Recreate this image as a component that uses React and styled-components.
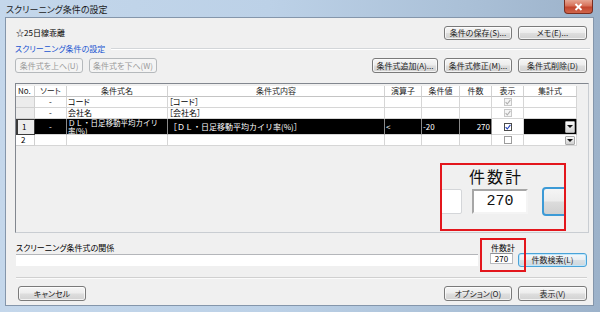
import React from 'react';
import styled, { createGlobalStyle, css } from 'styled-components';

const GlobalStyle = createGlobalStyle`
  html, body { margin: 0; padding: 0; background: #fff; }
  body {
    width: 600px; height: 312px; overflow: hidden;
    font-family: "Noto Sans CJK JP", "Noto Sans", sans-serif;
    font-feature-settings: "palt";
  }
  * { box-sizing: border-box; }
`;

const Window = styled.div`
  width: 600px;
  height: 312px;
  display: flex;
  flex-direction: column;
  background: linear-gradient(to right, #c4d7eb 0%, #bcd1e7 45%, #aac0d7 78%, #9cb2ca 100%);
`;

const TitleBar = styled.div`
  height: 17px;
  display: flex;
  align-items: flex-start;
  padding-left: 6px;
`;

const TitleText = styled.div`
  font-size: 9px;
  line-height: 16px;
  padding-top: 2px;
  color: #1b1b1b;
`;

const CloseButton = styled.div`
  margin-left: auto;
  margin-right: 7px;
  width: 29px;
  height: 14px;
  border: 1px solid #7a2d1f;
  border-top: none;
  border-radius: 0 0 4px 4px;
  background: linear-gradient(#e6a592 0%, #d77159 45%, #c2452d 55%, #d0654b 100%);
  display: flex;
  align-items: center;
  justify-content: center;
`;

const FrameBody = styled.div`
  flex: 1;
  display: flex;
  padding: 0 6px 6px 5px;
`;

const Client = styled.div`
  flex: 1;
  position: relative;
  background: #f0f0f0;
  border: 1px solid #8496ab;
  display: flex;
  flex-direction: column;
  padding: 8px 6px 4px 9px;
  font-size: 8px;
  color: #000;
`;

const TopRow = styled.div`
  height: 14px;
  display: flex;
  align-items: center;
  gap: 6px;
`;

const ListName = styled.div`
  font-size: 8px;
  line-height: 10px;
  padding-left: 1px;
  margin-right: auto;
`;

const Button = styled.button`
  flex: none;
  width: ${p => p.$w || 68}px;
  height: ${p => p.$h || 14}px;
  padding: 0;
  font-family: "Noto Sans CJK JP", sans-serif;
  font-feature-settings: "palt";
  font-size: 8px;
  line-height: 10px;
  color: #222;
  border: 1px solid #7a7a7a;
  border-radius: 3px;
  background: linear-gradient(#f6f6f6 0%, #ececec 48%, #dedede 52%, #d2d2d2 100%);
  box-shadow: inset 0 0 0 1px rgba(255,255,255,0.7);
  display: flex;
  align-items: center;
  justify-content: center;
  ${p => p.$ml && css`margin-left: ${p.$ml}px;`}
  ${p => p.disabled && css`
    border-color: #b5b9bc;
    background: #f4f4f4;
    color: #9a9a9a;
    box-shadow: none;
  `}
  ${p => p.$default && css`
    border-color: #4aa3d8;
    box-shadow: inset 0 0 0 1px #bfe6fb;
    background: linear-gradient(#f4f8fb 0%, #e9eef2 48%, #d9e0e5 52%, #cfd7dd 100%);
  `}
`;

const SectionRow = styled.div`
  margin-top: 4px;
  height: 10px;
  display: flex;
  align-items: center;
  margin-right: -3px;
`;

const SectionLabel = styled.div`
  color: #1a55d0;
  font-size: 8px;
  line-height: 10px;
`;

const SectionLine = styled.div`
  flex: 1;
  height: 2px;
  margin-left: 6px;
  border-top: 1px solid #d3d6d9;
  border-bottom: 1px solid #ffffff;
`;

const ButtonRow = styled.div`
  margin-top: 4px;
  height: 15px;
  display: flex;
  gap: 6px;
`;

const Spacer = styled.div`
  flex: 1;
`;

const GridBox = styled.div`
  margin-top: 10px;
  height: 150px;
  margin-right: -2px;
  border: 1px solid #82878f;
  border-right-color: #c9cdd2;
  border-bottom-color: #c9cdd2;
  background: #f0f0f0;
  padding-top: 2px;
  overflow: hidden;
`;

const COLS = '19px 32px 101px 217px 37px 38px 32px 32px 53px';

const HeaderRow = styled.div`
  display: grid;
  grid-template-columns: ${COLS};
  height: 11px;
`;

const HeadCell = styled.div`
  background: #fff;
  border-right: 1px solid #d2d2d2;
  border-bottom: 1px solid #c4c4c4;
  font-size: 8px;
  line-height: 10px;
  color: #222;
  text-align: ${p => p.$align || 'center'};
  padding: 0 2px;
  white-space: nowrap;
`;

const Row = styled.div`
  display: grid;
  grid-template-columns: ${COLS};
  height: ${p => (p.$tall ? 16 : 11)}px;
`;

const Cell = styled.div`
  background: ${p => (p.$selected ? '#000' : '#fff')};
  color: ${p => (p.$selected ? '#fff' : '#000')};
  border-right: 1px solid ${p => (p.$selected ? '#8a8a8a' : '#d6d6d6')};
  border-bottom: 1px solid #d6d6d6;
  font-size: 8px;
  line-height: 10px;
  padding: 0 1px;
  white-space: nowrap;
  overflow: hidden;
  display: flex;
  align-items: center;
  justify-content: ${p => p.$justify || 'flex-start'};
  ${p => p.$selected && css`font-feature-settings: normal;`}
`;

const NameLines = styled.div`
  font-size: 7.5px;
  line-height: 7.5px;
  white-space: normal;
`;

const NoCell = styled.div`
  font-size: 8px;
  line-height: 10px;
  padding-left: 5px;
  display: flex;
  align-items: center;
  border-right: 1px solid #d0d0d0;
  border-bottom: 1px solid #d0d0d0;
  background: ${p => (p.$kind === 'normal' ? '#fff' : '#ececec')};
  ${p => p.$kind === 'current' && css`
    border: 1px solid #3a3a3a;
    border-left-width: 2px;
    background: #ececec;
    padding-left: 4px;
  `}
`;

const CheckBox = styled.span`
  width: 8px;
  height: 8px;
  display: inline-flex;
  align-items: center;
  justify-content: center;
  border: 1px solid ${p => (p.$state === 'disabled' ? '#c8c8c8' : p.$state === 'checked' ? '#4a4a4a' : '#9c9c9c')};
  background: ${p => (p.$state === 'disabled' ? '#f5f5f5' : '#fff')};
`;

const DropArrow = styled.span`
  margin-left: auto;
  width: 10px;
  height: ${p => (p.$tall ? 12 : 9)}px;
  display: inline-flex;
  align-items: center;
  justify-content: center;
  border: 1px solid #a8a8a8;
  border-radius: 1px;
  background: linear-gradient(#fbfbfb, #e2e2e2 55%, #d2d2d2);
  &::after {
    content: "";
    border-left: 3px solid transparent;
    border-right: 3px solid transparent;
    border-top: 3px solid #111;
  }
`;

const LowerRow = styled.div`
  margin-top: 10px;
  height: 24px;
  display: flex;
  align-items: flex-end;
`;

const RelationField = styled.div`
  flex: 1;
  display: flex;
  flex-direction: column;
  margin-right: 12px;
  margin-bottom: 1px;
`;

const FieldLabel = styled.div`
  font-size: 8px;
  line-height: 10px;
  padding-left: 1px;
  white-space: nowrap;
`;

const RelationInput = styled.div`
  margin-top: 1px;
  margin-left: 1px;
  height: 12px;
  background: #fff;
  border-top: 1px solid #b4b6ba;
`;

const CountField = styled.div`
  width: 23px;
  margin-right: 5px;
  margin-bottom: 3px;
  display: flex;
  flex-direction: column;
`;

const CountBox = styled.div`
  height: 11px;
  background: #fff;
  border: 1px solid #b8bbbf;
  border-top-color: #8e9196;
  font-size: 8px;
  line-height: 9px;
  text-align: center;
`;

const BottomLine = styled.div`
  margin-top: 10px;
  margin-left: 1px;
  height: 2px;
  border-top: 1px solid #d0d0d0;
  border-bottom: 1px solid #fbfbfb;
`;

const BottomRow = styled.div`
  margin-top: 7px;
  height: 15px;
  display: flex;
  gap: 6px;
`;

const ZoomCallout = styled.div`
  position: absolute;
  left: 434px;
  top: 145px;
  width: 126px;
  height: 68px;
  border: 2px solid #e3161c;
  background: #f0f0f0;
  overflow: hidden;
  display: flex;
  flex-direction: column;
`;

const CalloutTitle = styled.div`
  margin-top: 3px;
  margin-left: 27px;
  font-size: 16px;
  line-height: 17px;
  letter-spacing: 2px;
  color: #111;
`;

const CalloutRow = styled.div`
  margin-top: 2px;
  display: flex;
  align-items: center;
  height: 29px;
`;

const StubBox = styled.div`
  flex: none;
  width: 40px;
  height: 25px;
  margin-left: -20px;
  background: #fff;
  border: 1px solid #d4d6d9;
  border-radius: 2px;
`;

const BigCount = styled.div`
  flex: none;
  width: 56px;
  height: 25px;
  margin-left: 10px;
  background: #fff;
  border: 2px solid #a6a6a6;
  border-right-color: #f4f4f4;
  border-bottom-color: #f4f4f4;
  font-family: "Liberation Mono", monospace;
  font-size: 15px;
  line-height: 21px;
  text-align: center;
  color: #111;
`;

const StubButton = styled.div`
  flex: none;
  width: 40px;
  height: 29px;
  margin-left: 14px;
  border: 2px solid #3c9ad6;
  border-radius: 4px;
  background: linear-gradient(#f5f5f5 0%, #ececec 48%, #dcdcdc 52%, #d0d0d0 100%);
`;

const CountHighlight = styled.div`
  position: absolute;
  left: 474px;
  top: 220px;
  width: 46px;
  height: 34px;
  border: 2px solid #e3161c;
  pointer-events: none;
`;

const rows = [
  { no: '', kind: 'fixed', sort: '-', name: 'コード', content: '［コード］', check: 'disabled' },
  { no: '', kind: 'fixed', sort: '-', name: '会社名', content: '［会社名］', check: 'disabled' },
  {
    no: '1', kind: 'current', sort: '-', name: ['ＤＬ・日足移動平均カイリ', '率(%)'],
    content: '［ＤＬ・日足移動平均カイリ率(%)］', op: '<', val: '-20', count: '270',
    check: 'checked', agg: true, selected: true, tall: true,
  },
  { no: '2', kind: 'normal', sort: '', name: '', content: '', check: 'empty', agg: true },
];

function Check({ state }) {
  return (
    <CheckBox $state={state}>
      {state !== 'empty' && (
        <svg width="6" height="6" viewBox="0 0 6 6">
          <path d="M0.6 3.2 L2.3 5 L5.4 0.8" fill="none"
            stroke={state === 'checked' ? '#1f3fb8' : '#b0b0b0'} strokeWidth="1.1" />
        </svg>
      )}
    </CheckBox>
  );
}

export default function App() {
  return (
    <>
      <GlobalStyle />
      <Window>
        <TitleBar>
          <TitleText>スクリーニング条件の設定</TitleText>
          <CloseButton>
            <svg width="9" height="8" viewBox="0 0 9 8">
              <path d="M1.5 1 L7.5 7 M7.5 1 L1.5 7" stroke="#fff" strokeWidth="1.8" />
            </svg>
          </CloseButton>
        </TitleBar>
        <FrameBody>
          <Client>
            <TopRow>
              <ListName>☆25日線乖離</ListName>
              <Button>条件の保存(S)...</Button>
              <Button $w={69}>メモ(E)...</Button>
            </TopRow>
            <SectionRow>
              <SectionLabel>スクリーニング条件の設定</SectionLabel>
              <SectionLine />
            </SectionRow>
            <ButtonRow>
              <Button disabled $h={15}>条件式を上へ(U)</Button>
              <Button disabled $h={15}>条件式を下へ(W)</Button>
              <Spacer />
              <Button $w={66} $h={15}>条件式追加(A)...</Button>
              <Button $h={15}>条件式修正(M)...</Button>
              <Button $w={69} $h={15}>条件式削除(D)</Button>
            </ButtonRow>
            <GridBox>
              <HeaderRow>
                <HeadCell $align="left">No.</HeadCell>
                <HeadCell>ソート</HeadCell>
                <HeadCell>条件式名</HeadCell>
                <HeadCell>条件式内容</HeadCell>
                <HeadCell>演算子</HeadCell>
                <HeadCell>条件値</HeadCell>
                <HeadCell>件数</HeadCell>
                <HeadCell>表示</HeadCell>
                <HeadCell>集計式</HeadCell>
              </HeaderRow>
              {rows.map((r, i) => (
                <Row key={i} $tall={r.tall}>
                  <NoCell $kind={r.kind}>{r.no}</NoCell>
                  <Cell $selected={r.selected} $justify="center">{r.sort}</Cell>
                  <Cell $selected={r.selected}>
                    {Array.isArray(r.name) ? (
                      <NameLines>{r.name[0]}<br />{r.name[1]}</NameLines>
                    ) : r.name}
                  </Cell>
                  <Cell $selected={r.selected}>{r.content}</Cell>
                  <Cell $selected={r.selected}>{r.op}</Cell>
                  <Cell $selected={r.selected}>{r.val}</Cell>
                  <Cell $selected={r.selected} $justify="flex-end">{r.count}</Cell>
                  <Cell $justify="center"><Check state={r.check} /></Cell>
                  <Cell $selected={r.selected}>{r.agg && <DropArrow $tall={r.tall} />}</Cell>
                </Row>
              ))}
            </GridBox>
            <LowerRow>
              <RelationField>
                <FieldLabel>スクリーニング条件式の関係</FieldLabel>
                <RelationInput />
              </RelationField>
              <CountField>
                <FieldLabel>件数計</FieldLabel>
                <CountBox>270</CountBox>
              </CountField>
              <Button $default $w={69}>件数検索(L)</Button>
            </LowerRow>
            <BottomLine />
            <BottomRow>
              <Button $h={15} $ml={3}>キャンセル</Button>
              <Spacer />
              <Button $h={15}>オプション(O)</Button>
              <Button $h={15} $w={69}>表示(V)</Button>
            </BottomRow>
            <ZoomCallout>
              <CalloutTitle>件数計</CalloutTitle>
              <CalloutRow>
                <StubBox />
                <BigCount>270</BigCount>
                <StubButton />
              </CalloutRow>
            </ZoomCallout>
            <CountHighlight />
          </Client>
        </FrameBody>
      </Window>
    </>
  );
}
